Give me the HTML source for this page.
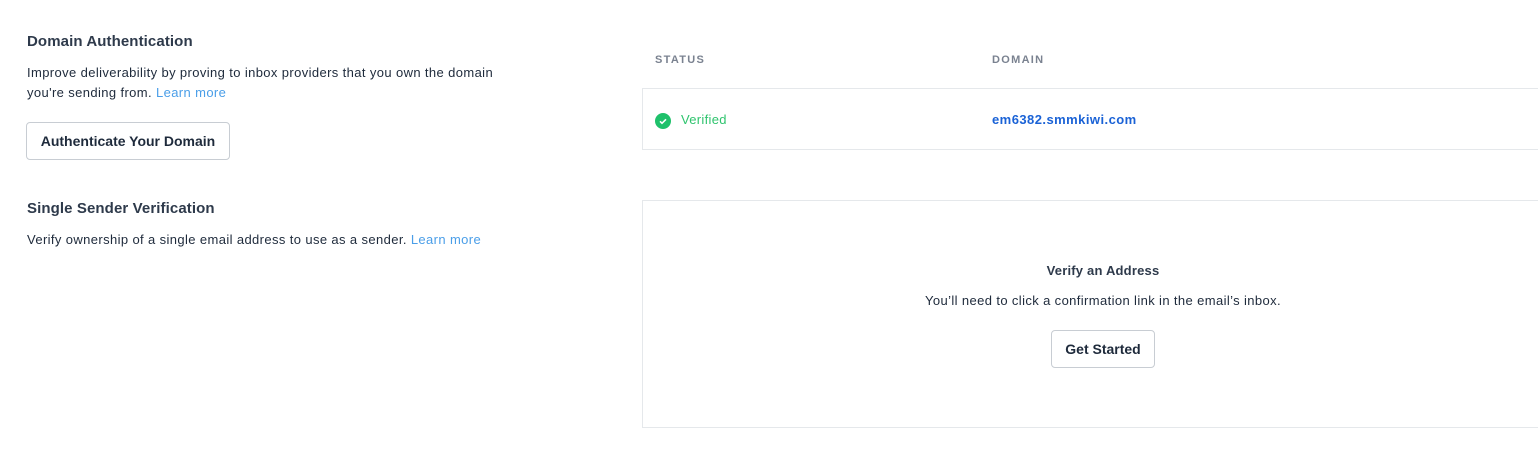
<!DOCTYPE html>
<html><head><style>
body{margin:0;width:1538px;height:471px;background:#fff;font-family:"Liberation Sans",sans-serif;position:relative;overflow:hidden;color:#1e2a3b}
.a{position:absolute;white-space:nowrap}
h2{font-size:15px;font-weight:bold;color:#2e3a4b;margin:0;letter-spacing:0.1px}
.p{font-size:13px;color:#1e2a3b;line-height:20px;letter-spacing:0.38px}
.l{color:#4a9ee8}
.btn{position:absolute;border:1px solid #c8cdd3;border-radius:4px;background:#fff;font-weight:bold;font-size:14px;color:#1e2a3b;display:flex;align-items:center;justify-content:center}
.th{font-size:11px;font-weight:bold;letter-spacing:1.3px;color:#7a8290}
.box{position:absolute;border:1px solid #e5e8eb;border-right:none}
</style></head><body>
<div class="a" style="left:27px;top:33px"><h2>Domain Authentication</h2></div>
<div class="a p" style="left:27px;top:63px">Improve deliverability by proving to inbox providers that you own the domain<br>you're sending from. <span class="l">Learn more</span></div>
<div class="btn" style="left:26px;top:122px;width:202px;height:36px">Authenticate Your Domain</div>
<div class="a" style="left:27px;top:200px"><h2>Single Sender Verification</h2></div>
<div class="a p" style="left:27px;top:230px">Verify ownership of a single email address to use as a sender. <span class="l">Learn more</span></div>

<div class="a th" style="left:655px;top:54px">STATUS</div>
<div class="a th" style="left:992px;top:54px">DOMAIN</div>
<div class="box" style="left:642px;top:88px;width:900px;height:60px"></div>
<svg class="a" style="left:655px;top:113px" width="16" height="16" viewBox="0 0 16 16"><circle cx="8" cy="8" r="8" fill="#1fc16b"/><path d="M5 8.3l2 2 4-4" stroke="#fff" stroke-width="1.6" fill="none"/></svg>
<div class="a" style="left:681px;top:112px;font-size:13px;color:#2fc46e;letter-spacing:0.3px">Verified</div>
<div class="a" style="left:992px;top:112px;font-size:13px;font-weight:bold;color:#1a62d6;letter-spacing:0.45px">em6382.smmkiwi.com</div>

<div class="box" style="left:642px;top:200px;width:900px;height:226px"></div>
<div class="a" style="left:642px;width:922px;top:263px;text-align:center;font-size:13px;font-weight:bold;color:#2e3a4b;letter-spacing:0.2px">Verify an Address</div>
<div class="a p" style="left:642px;width:922px;top:291px;text-align:center">You’ll need to click a confirmation link in the email’s inbox.</div>
<div class="btn" style="left:1051px;top:330px;width:102px;height:36px">Get Started</div>
</body></html>
